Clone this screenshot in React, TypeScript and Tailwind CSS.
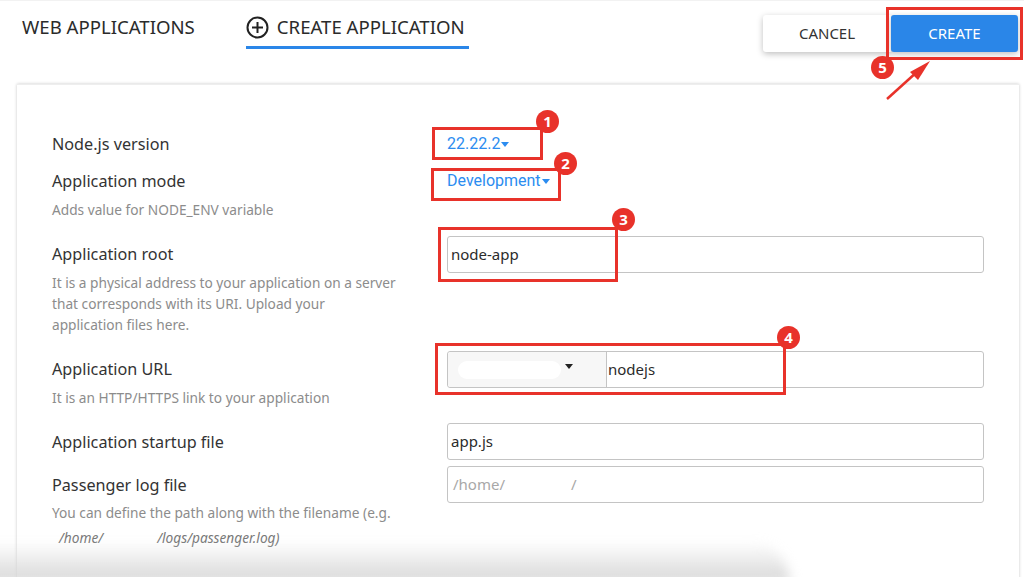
import { ReactNode } from "react"

const font = "font-['Noto_Sans',sans-serif]"

function Row({ label, help, className, labelClass = "", children }: { label: string; help?: ReactNode; className: string; labelClass?: string; children: ReactNode }) {
  return (
    <div className={`flex ${className}`}>
      <div className="w-[395px]">
        <div className={`h-9 flex items-center text-[16.2px] text-[#333] ${labelClass}`}>{label}</div>
        {help && <div className="text-[13.7px] leading-[21px] text-[#8c8c8c] w-[346px]">{help}</div>}
      </div>
      <div className="w-[537px]">{children}</div>
    </div>
  )
}

function Field({ value, muted }: { value: ReactNode; muted?: boolean }) {
  return (
    <div className={`h-[37px] rounded-[3px] border border-[#c4c4c4] bg-white flex items-center px-[3px] text-[15px] ${muted ? "text-[#a8a8a8] pl-[5px]" : "text-[#2b2b2b]"}`}>
      {value}
    </div>
  )
}

function Dropdown({ value }: { value: string }) {
  return (
    <div className="h-9 flex items-center font-['Roboto',sans-serif] text-[16px] text-[#2b8cf0]">
      {value}
      <Caret className="border-t-[#2b8cf0] ml-[1px]" />
    </div>
  )
}

function Badge({ n, className }: { n: number; className: string }) {
  return (
    <div className={`absolute w-[23px] h-[23px] rounded-full bg-[#e8322a] text-white text-[15px] font-bold flex items-center justify-center ${className}`}>
      {n}
    </div>
  )
}

function Box({ className }: { className: string }) {
  return <div className={`absolute border-[3px] border-[#e8322a] ${className}`} />
}

function Caret({ className }: { className: string }) {
  return <span className={`inline-block w-0 h-0 border-x-[4.5px] border-x-transparent border-t-[5px] ${className}`} />
}

export default function App() {
  return (
    <div className={`relative w-[1024px] h-[577px] overflow-hidden bg-white ${font}`}>
      <div className="flex justify-between h-[84px] border-t border-[#f2f2f2]">
        <div className="flex pl-[22px] pt-[14px] text-[18.6px] text-[#2b2b2b]">
          <div className="h-[24px] leading-[24px]">WEB APPLICATIONS</div>
          <div className="ml-[51px] h-[34px] w-[223px] border-b-[3px] border-[#2a86e8] flex items-start gap-[8px]">
            <svg width="23" height="23" viewBox="0 0 23 23" fill="none" stroke="#222" strokeWidth="2" className="mt-px">
              <circle cx="11.5" cy="11.5" r="10" />
              <path d="M11.5 6v11M6 11.5h11" />
            </svg>
            <span className="leading-[24px]">CREATE APPLICATION</span>
          </div>
        </div>
        <div className="flex pt-[14px] pr-[6px] items-start">
          <button className="w-[128px] h-[37px] rounded-l-[3px] bg-white shadow-[0_2px_6px_rgba(0,0,0,0.25)] text-[15px] text-[#333]">CANCEL</button>
          <button className="w-[127px] h-[37px] rounded-[3px] bg-[#2a86e8] shadow-[0_2px_6px_rgba(0,0,0,0.25)] text-[15px] text-white">CREATE</button>
        </div>
      </div>

      <div className="ml-[17px] mr-[5px] h-[520px] pl-[35px] pt-[41px] bg-white border-t border-[#eee] shadow-[0_0_3px_rgba(0,0,0,0.22)]">
        <Row label="Node.js version" className="h-[37px]">
          <Dropdown value="22.22.2" />
        </Row>
        <Row label="Application mode" help="Adds value for NODE_ENV variable" className="h-[55px]">
          <Dropdown value="Development" />
        </Row>
        <Row
          label="Application root"
          className="mt-[18px] h-[97px]"
          help="It is a physical address to your application on a server that corresponds with its URI. Upload your application files here."
        >
          <Field value="node-app" />
        </Row>
        <Row label="Application URL" help="It is an HTTP/HTTPS link to your application" className="mt-[18px] h-[54px]">
          <div className="h-[37px] rounded-[3px] border border-[#c4c4c4] bg-white flex text-[15px] text-[#2b2b2b]">
            <div className="w-[159px] bg-[#f7f7f7] border-r border-[#c4c4c4] rounded-l-[3px] flex items-center pl-[10px]">
              <div className="w-[103px] h-[18px] rounded-full bg-white" />
              <Caret className="border-t-[#222] ml-[4px] mb-[6px]" />
            </div>
            <div className="flex items-center pl-px">nodejs</div>
          </div>
        </Row>
        <Row label="Application startup file" labelClass="translate-y-px" className="mt-[18px] h-[37px]">
          <Field value="app.js" />
        </Row>
        <Row
          label="Passenger log file"
          labelClass="translate-y-px"
          className="mt-[6px]"
          help={
            <>
              You can define the path along with the filename (e.g.
              <div className="italic text-[#777] pl-[7px] mt-[4px] flex">
                <span>/home/</span>
                <span className="w-[54px]" />
                <span>/logs/passenger.log)</span>
              </div>
            </>
          }
        >
          <Field muted value={<><span>/home/</span><span className="w-[66px]" /><span>/</span></>} />
        </Row>
      </div>

      {/* bottom fade of the screenshot */}
      <div className="absolute left-[-20px] bottom-[-6px] w-[810px] h-[42px] rounded-tr-[80px] bg-gradient-to-b from-transparent to-[#d6d6d6] blur-[6px] pointer-events-none" />

      {/* annotations */}
      <Box className="left-[432px] top-[127px] w-[111px] h-[33px]" />
      <Box className="left-[431px] top-[168px] w-[130px] h-[33px]" />
      <Box className="left-[438px] top-[227px] w-[180px] h-[55px]" />
      <Box className="left-[435px] top-[343px] w-[351px] h-[52px]" />
      <Box className="left-[886px] top-[7px] w-[137px] h-[53px]" />
      <Badge n={1} className="left-[536px] top-[110px]" />
      <Badge n={2} className="left-[554px] top-[152px]" />
      <Badge n={3} className="left-[612px] top-[208px]" />
      <Badge n={4} className="left-[777px] top-[326px]" />
      <Badge n={5} className="left-[871px] top-[56px]" />
      <svg className="absolute left-[880px] top-[55px]" width="60" height="50" viewBox="0 0 60 50" fill="none">
        <path d="M7 44 L38 16" stroke="#e8322a" strokeWidth="2.5" />
        <path d="M50 6 L30 17 L38 25 Z" fill="#e8322a" />
      </svg>
    </div>
  )
}
